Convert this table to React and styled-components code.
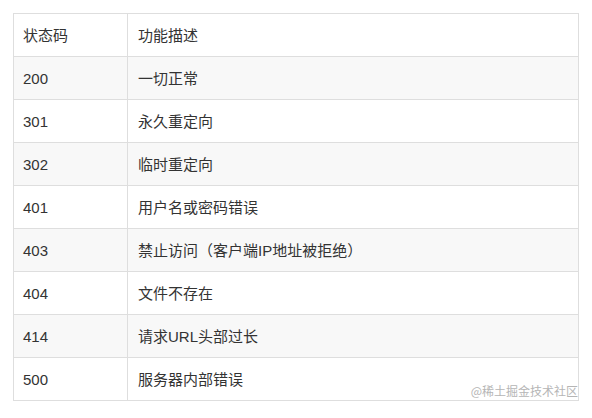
import React from "react";
import styled, { createGlobalStyle } from "styled-components";

const GlobalStyle = createGlobalStyle`
  body {
    margin: 0;
    background: #fff;
    font-family: "Liberation Sans", "Noto Sans CJK SC", sans-serif;
  }
`;

const Page = styled.div`
  position: relative;
  width: 592px;
  height: 418px;
  padding: 13px 0 0 13px;
  box-sizing: border-box;
`;

const Table = styled.table`
  width: 566px;
  border-collapse: collapse;
  font-size: 15px;
  color: #333;
`;

const Row = styled.tr`
  height: 43px;
  background: ${(p) => (p.$shaded ? "#f8f8f8" : "#fff")};
`;

const Cell = styled.td`
  border: 1px solid #dedede;
  padding: 0 0 0 ${(p) => (p.$first ? "9px" : "10px")};
  width: ${(p) => (p.$first ? "104px" : "auto")};
  vertical-align: middle;
  line-height: 1;
`;

const Watermark = styled.div`
  position: absolute;
  right: 14px;
  top: 385px;
  font-size: 12px;
  color: #b5b5b5;
  font-family: "Noto Sans CJK SC", sans-serif;
  background: rgba(255, 255, 255, 0.6);
  line-height: 1;
`;

const rows = [
  ["状态码", "功能描述"],
  ["200", "一切正常"],
  ["301", "永久重定向"],
  ["302", "临时重定向"],
  ["401", "用户名或密码错误"],
  ["403", "禁止访问（客户端IP地址被拒绝）"],
  ["404", "文件不存在"],
  ["414", "请求URL头部过长"],
  ["500", "服务器内部错误"],
];

export default function App() {
  return (
    <Page>
      <GlobalStyle />
      <Table>
        <tbody>
          {rows.map(([code, desc], i) => (
            <Row key={code} $shaded={i % 2 === 1}>
              <Cell $first>{code}</Cell>
              <Cell>{desc}</Cell>
            </Row>
          ))}
        </tbody>
      </Table>
      <Watermark>@稀土掘金技术社区</Watermark>
    </Page>
  );
}
